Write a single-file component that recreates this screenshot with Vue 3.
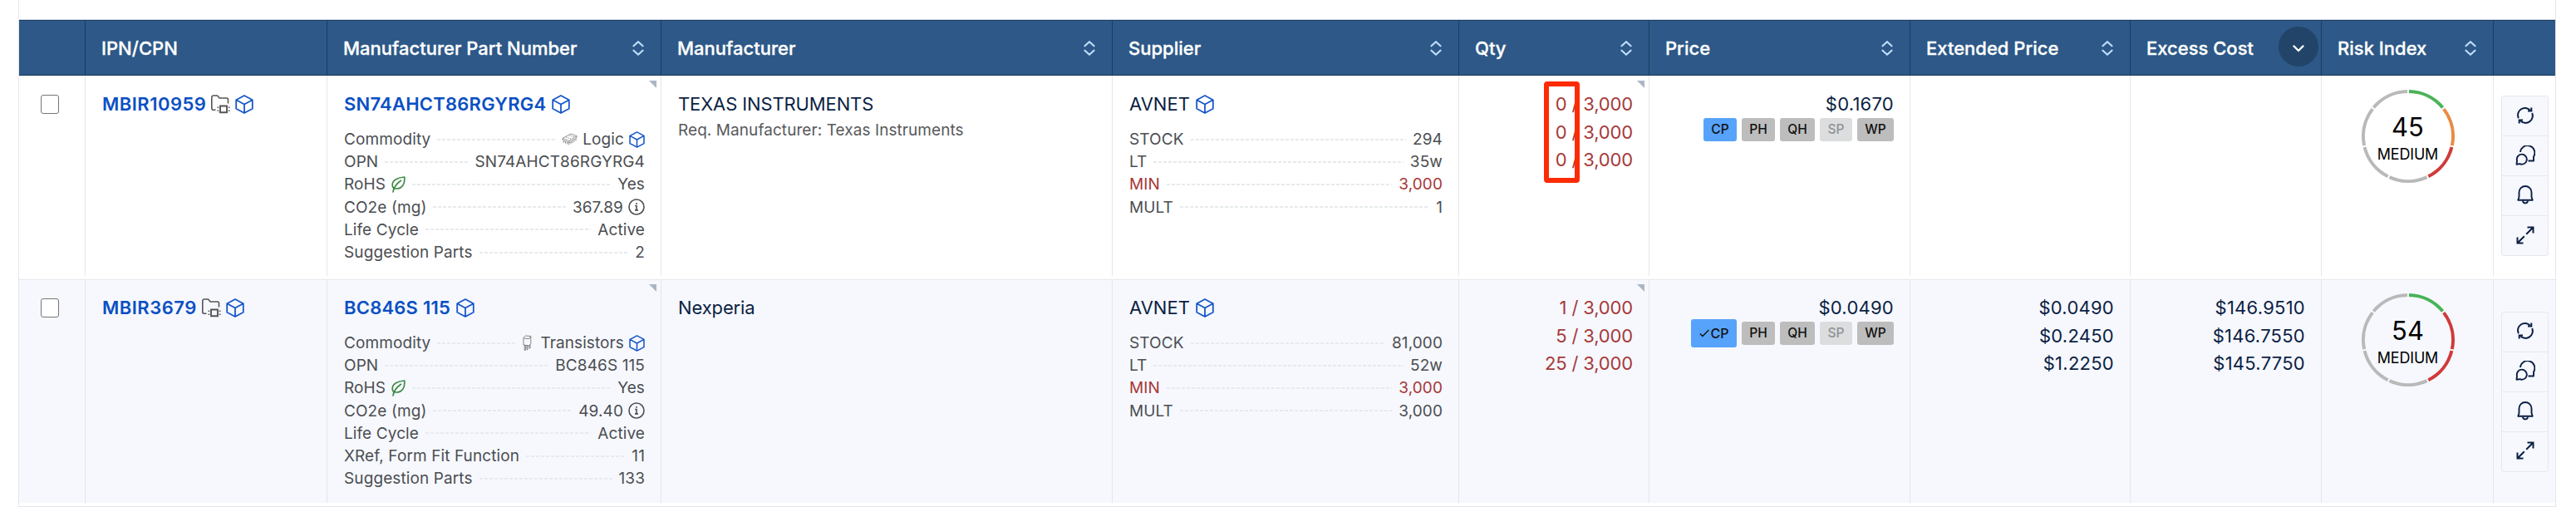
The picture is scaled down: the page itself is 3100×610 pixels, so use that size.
<template>
  <div class="page">
    <div class="grid-wrap">
      <!-- header -->
      <div class="row head">
        <div v-for="col in columns" :key="col.key" class="th">
          <span>{{ col.label }}</span>
          <span v-if="col.sort === 'active'" class="sort-active">
            <svg width="14" height="9" viewBox="0 0 14 9" fill="none" stroke="currentColor" stroke-width="2.4" stroke-linecap="round" stroke-linejoin="round">
              <path d="M1.5 1.5l5.5 5.5 5.5-5.5"/>
            </svg>
          </span>
          <svg v-else-if="col.sort" class="sort" width="14" height="18" viewBox="0 0 14 18" fill="none" stroke="currentColor" stroke-width="2.2" stroke-linecap="round" stroke-linejoin="round">
            <path d="M1.5 6.3L7 1.2l5.5 5.1"/>
            <path d="M1.5 11.7L7 16.800l5.5-5.1"/>
          </svg>
        </div>
      </div>

      <!-- parts -->
      <div v-for="part in parts" :key="part.ipn" class="row body" :class="{ odd: part.odd }">
        <div class="td check-cell"><span class="checkbox"></span></div>

        <div class="td">
          <div class="title link ipn">
            <span>{{ part.ipn }}</span>
            <svg class="folder" width="23" height="23" viewBox="0 0 23 23" fill="none" stroke="currentColor" stroke-width="1.6">
              <path d="M5.5 18.3H2.8a2 2 0 0 1-2-2V3a2 2 0 0 1 2-2h4.700l2.600 3h8.600a1.800 1.800 0 0 1 1.800 1.800V10.500"/>
              <path d="M11 13.500h8v7.700h-8z" stroke-width="1.900"/>
              <path d="M7.500 15.200h1.700M7.500 19.300h1.700M20.800 15.200h1.700M20.800 19.300h1.700"/>
            </svg>
            <svg class="cube" width="22" height="23" viewBox="0 0 22 23"><use href="#cube"/></svg>
          </div>
        </div>

        <div class="td">
          <i class="corner"></i>
          <div class="title link mpn">
            <span>{{ part.mpn }}</span>
            <svg class="cube" width="22" height="23" viewBox="0 0 22 23"><use href="#cube"/></svg>
          </div>
          <div class="details">
            <div v-for="d in part.details" :key="d.label" class="detail">
              <span>{{ d.label }}</span>
              <svg v-if="d.leaf" class="leaf" width="17" height="20" viewBox="0 0 17 20" fill="none" stroke="currentColor" stroke-width="1.7" stroke-linecap="round" stroke-linejoin="round">
                <path d="M15.8 1C8 1.5 1.200 4.500 1.200 10.300c0 2.400 1.300 4.700 4.300 4.700 7.500 0 11-5.500 10.300-14z"/>
                <path d="M11.500 5.300C7 8.500 3 12 2 18.800"/>
              </svg>
              <i class="dots"></i>
              <svg v-if="d.icon === 'chip'" class="chip" width="19" height="15" viewBox="0 0 19 15" fill="none" stroke="currentColor" stroke-width="0.8">
                <path d="M1 6.500L11 1l7 2.600-9 5.900z"/>
                <path d="M1 6.500v2l8 3.200V9.500M9 11.700l9-5.900V3.600"/>
                <path d="M2.500 9.500v2.300M4.500 10.400v2.300M6.500 11.200v2.300M8.500 12v2.300M11 11v2.300M13 9.700V12M15 8.400v2.300M17 7v2.300"/>
                <path d="M5 5l7.500 2.400M9 2.800l7 2.200" stroke-dasharray="1.500 1"/>
              </svg>
              <svg v-if="d.icon === 'transistor'" class="transistor" width="11" height="19" viewBox="0 0 11 19" fill="none" stroke="currentColor" stroke-width="0.9">
                <path d="M1 3.500L3.300 1l6.500.500v9L7.800 13 1 12z"/>
                <path d="M1 3.500l1.500.800 5.300.300 2-3M2.300 12.200v6.300h1v-6M5 12.600v5.200h1v-5M8 12.800v3.200h1v-4.500"/>
              </svg>
              <span>{{ d.value }}</span>
              <svg v-if="d.icon" class="cube small" width="19" height="20" viewBox="0 0 22 23"><use href="#cube"/></svg>
              <svg v-if="d.info" class="info" width="20" height="20" viewBox="0 0 20 20" fill="none" stroke="currentColor" stroke-width="1.6">
                <circle cx="10" cy="10" r="9"/>
                <path d="M8.200 8.500H10v5.200M8 13.900h4"/>
                <path d="M10 5v1.700"/>
              </svg>
            </div>
          </div>
        </div>

        <div class="td">
          <div class="title name">{{ part.manufacturer }}</div>
          <div v-if="part.requested" class="requested">Req. Manufacturer: {{ part.requested }}</div>
        </div>

        <div class="td">
          <div class="title supplier">
            <span>{{ part.supplier }}</span>
            <svg class="cube" width="22" height="23" viewBox="0 0 22 23"><use href="#cube"/></svg>
          </div>
          <div class="details">
            <div v-for="s in part.stock" :key="s.label" class="detail" :class="{ warn: s.warn }">
              <span>{{ s.label }}</span>
              <i class="dots"></i>
              <span>{{ s.value }}</span>
            </div>
          </div>
        </div>

        <div class="td">
          <i class="corner"></i>
          <div v-for="(q, i) in part.qty" :key="i" class="line qty">{{ q }} / 3,000</div>
          <div v-if="part.marked" class="mark"></div>
        </div>

        <div class="td">
          <div class="line money">{{ part.price }}</div>
          <div class="tags">
            <span class="tag selected" :class="{ checked: part.checked }">
              <svg v-if="part.checked" width="12" height="10" viewBox="0 0 12 10" fill="none" stroke="currentColor" stroke-width="1.4">
                <path d="M.8 5.500l3.200 3L11.300 1"/>
              </svg>CP
            </span>
            <span class="tag">PH</span>
            <span class="tag w42">QH</span>
            <span class="tag muted">SP</span>
            <span class="tag w44">WP</span>
          </div>
        </div>

        <div class="td">
          <div v-for="p in part.extended" :key="p" class="line money">{{ p }}</div>
        </div>

        <div class="td">
          <div v-for="p in part.excess" :key="p" class="line money">{{ p }}</div>
        </div>

        <div class="td risk-cell">
          <div class="gauge">
            <svg width="112" height="112" viewBox="0 0 112 112" fill="none" stroke-width="4">
              <path v-for="(color, i) in part.risk" :key="i" :d="arc(i)" :stroke="color"/>
            </svg>
            <div class="gauge-text">
              <span class="score">{{ part.score }}</span>
              <span class="level">MEDIUM</span>
            </div>
          </div>
        </div>

        <div class="td action-cell">
          <div class="actions">
            <div class="action">
              <svg width="22" height="22" viewBox="0 0 22 22" fill="none" stroke="currentColor" stroke-width="2">
                <path d="M2.800 14.200A8.600 8.600 0 0 1 16.800 4.600M19.200 8a8.600 8.600 0 0 1-14 9.400"/>
                <path d="M18.300 1.600v4h-4.300M3.700 20.400v-4h4.300"/>
              </svg>
            </div>
            <div class="action">
              <svg width="24" height="24" viewBox="0 0 24 24" fill="none" stroke="currentColor" stroke-width="1.9" stroke-linejoin="round">
                <path d="M6 8a8.700 8.700 0 1 1 16 5.500v5h-6.500"/>
                <path d="M1.500 22.700l.500-4.500a6 6 0 1 1 3.300 3.900z"/>
              </svg>
            </div>
            <div class="action">
              <svg width="20" height="23" viewBox="0 0 20 23" fill="none" stroke="currentColor" stroke-width="1.9" stroke-linejoin="round">
                <path d="M1.300 17.800l1.200-3.800V8.500a7.500 7.500 0 0 1 15 0V14l1.200 3.800z"/>
                <path d="M7 18.500c.200 2 1.300 3 3 3s2.800-1 3-3"/>
              </svg>
            </div>
            <div class="action">
              <svg width="22" height="22" viewBox="0 0 22 22" fill="none" stroke="currentColor" stroke-width="2">
                <path d="M13.500 1.500h7v7M20 2l-7.800 7.800M8.500 20.500h-7v-7M2 20l7.800-7.800"/>
              </svg>
            </div>
          </div>
        </div>
      </div>
    </div>

    <svg class="defs" width="0" height="0">
      <symbol id="cube" viewBox="0 0 22 23">
        <path d="M11 1l9.800 5.200v10.600L11 22 1.200 16.800V6.200zM1.200 6.200L11 11.500l9.800-5.300M11 11.500V22" fill="none" stroke="currentColor" stroke-width="1.8" stroke-linejoin="round"/>
      </symbol>
    </svg>
  </div>
</template>

<script setup>
const columns = [
  { key: 'check', label: '' },
  { key: 'ipn', label: 'IPN/CPN' },
  { key: 'mpn', label: 'Manufacturer Part Number', sort: 'both' },
  { key: 'manufacturer', label: 'Manufacturer', sort: 'both' },
  { key: 'supplier', label: 'Supplier', sort: 'both' },
  { key: 'qty', label: 'Qty', sort: 'both' },
  { key: 'price', label: 'Price', sort: 'both' },
  { key: 'extended', label: 'Extended Price', sort: 'both' },
  { key: 'excess', label: 'Excess Cost', sort: 'active' },
  { key: 'risk', label: 'Risk Index', sort: 'both' },
  { key: 'actions', label: '' }
]

const GREEN = '#49b358'
const ORANGE = '#e98b45'
const RED = '#d13a3a'
const GREY = '#b9b9b9'

const parts = [
  {
    ipn: 'MBIR10959',
    mpn: 'SN74AHCT86RGYRG4',
    details: [
      { label: 'Commodity', value: 'Logic', icon: 'chip' },
      { label: 'OPN', value: 'SN74AHCT86RGYRG4' },
      { label: 'RoHS', value: 'Yes', leaf: true },
      { label: 'CO2e (mg)', value: '367.89', info: true },
      { label: 'Life Cycle', value: 'Active' },
      { label: 'Suggestion Parts', value: '2' }
    ],
    manufacturer: 'TEXAS INSTRUMENTS',
    requested: 'Texas Instruments',
    supplier: 'AVNET',
    stock: [
      { label: 'STOCK', value: '294' },
      { label: 'LT', value: '35w' },
      { label: 'MIN', value: '3,000', warn: true },
      { label: 'MULT', value: '1' }
    ],
    qty: [0, 0, 0],
    marked: true,
    price: '$0.1670',
    extended: [],
    excess: [],
    score: 45,
    risk: [GREEN, ORANGE, RED, GREY, GREY, GREY, GREY]
  },
  {
    odd: true,
    ipn: 'MBIR3679',
    mpn: 'BC846S 115',
    details: [
      { label: 'Commodity', value: 'Transistors', icon: 'transistor' },
      { label: 'OPN', value: 'BC846S 115' },
      { label: 'RoHS', value: 'Yes', leaf: true },
      { label: 'CO2e (mg)', value: '49.40', info: true },
      { label: 'Life Cycle', value: 'Active' },
      { label: 'XRef, Form Fit Function', value: '11' },
      { label: 'Suggestion Parts', value: '133' }
    ],
    manufacturer: 'Nexperia',
    supplier: 'AVNET',
    stock: [
      { label: 'STOCK', value: '81,000' },
      { label: 'LT', value: '52w' },
      { label: 'MIN', value: '3,000', warn: true },
      { label: 'MULT', value: '3,000' }
    ],
    qty: [1, 5, 25],
    price: '$0.0490',
    checked: true,
    extended: ['$0.0490', '$0.2450', '$1.2250'],
    excess: ['$146.9510', '$146.7550', '$145.7750'],
    score: 54,
    risk: [GREEN, RED, RED, GREY, GREY, GREY, GREY]
  }
]

// one of seven ring segments, clockwise from the top
function arc(i) {
  const step = (Math.PI * 2) / 7
  const gap = 0.018
  const a = i * step - Math.PI / 2 + gap
  const b = (i + 1) * step - Math.PI / 2 - gap
  const pt = (t) => (56 + 54 * Math.cos(t)).toFixed(2) + ' ' + (56 + 54 * Math.sin(t)).toFixed(2)
  return `M${pt(a)}A54 54 0 0 1 ${pt(b)}`
}
</script>

<style>
body {
  background: #fff;
}
</style>

<style scoped>
.page {
  height: 610px;
  padding: 0 24px 0 22px;
  box-sizing: border-box;
  overflow: hidden;
  font-family: Inter, "Liberation Sans", sans-serif;
  font-size: 22px;
  color: #0c1f44;
}

.grid-wrap {
  height: 610px;
  box-sizing: border-box;
  border-left: 1px solid #e3e6ed;
  border-right: 1px solid #e3e6ed;
  padding-top: 23px;
}

.row {
  display: grid;
  grid-template-columns: 80px 291px 402px 543px 417px 229px 314px 265px 230px 207px 74px;
}

.head {
  height: 68px;
  box-sizing: border-box;
  background: #2d5887;
  border-top: 1px solid #d5dfeb;
  border-bottom: 1px solid #193556;
  box-shadow: inset 0 1px 0 #1d3c62;
}

.th {
  display: flex;
  align-items: center;
  justify-content: space-between;
  padding: 2px 20px 0 19px;
  border-right: 1px solid #1c3b61;
  color: #fff;
  font-weight: 500;
  -webkit-text-stroke: 0.3px #fff;
  white-space: nowrap;
}

.th:last-child {
  border-right: 0;
}

.sort {
  color: #bfdcfb;
}

.sort-active {
  display: flex;
  align-items: center;
  justify-content: center;
  width: 48px;
  height: 48px;
  margin: -4px -17px 0 0;
  border-radius: 50%;
  background: #224468;
}

.sort-active svg {
  margin-top: 4px;
}

.body {
  height: 245px;
  box-sizing: border-box;
  padding-bottom: 4px;
}

.body.odd {
  height: 274px;
  border-top: 1px solid #e3e6ee;
  border-bottom: 1px solid #e3e6ed;
}

.body.odd .td {
  background: #f6f8fd;
  padding-top: 16px;
}

.td {
  position: relative;
  padding: 17px 19px 0 20px;
  border-right: 1px solid #e3e6ec;
}

.td:last-child {
  border-right: 0;
}

.title,
.line {
  height: 34px;
  line-height: 35px;
  white-space: nowrap;
}

.title {
  display: flex;
  align-items: center;
}

.link {
  color: #0b50c3;
  font-weight: 600;
  letter-spacing: 0.22px;
}

.ipn {
  letter-spacing: 0.48px;
}

.name {
  letter-spacing: -0.12px;
}

.cube {
  color: #1757c8;
  margin-left: 7px;
}

.folder {
  color: #555;
  margin-left: 6px;
}

.folder + .cube {
  margin-left: 6px;
}

.check-cell {
  padding: 23px 0 0 26px;
}

.body.odd .check-cell {
  padding-top: 22px;
}

.checkbox {
  display: block;
  width: 22px;
  height: 23px;
  box-sizing: border-box;
  border: 1px solid #767676;
  border-radius: 3px;
  background: #fff;
}

.corner {
  position: absolute;
  top: 6px;
  right: 5px;
  width: 9px;
  height: 9px;
  background: #abb6c3;
  clip-path: polygon(0 0, 100% 0, 100% 100%);
}

.body.odd .corner {
  top: 5px;
}

.details {
  margin-top: 12px;
}

.detail {
  display: flex;
  align-items: center;
  height: 27.2px;
  font-size: 19px;
  line-height: 27.2px;
  letter-spacing: 0.1px;
  color: #4c4e52;
  white-space: nowrap;
}

.detail.warn {
  color: #a83636;
}

.dots {
  flex: 1;
  height: 2px;
  margin: 0 8px;
  background: repeating-linear-gradient(90deg, #e6eaed 0 4px, transparent 4px 6px);
}

.leaf {
  color: #3f8a45;
  margin-left: 7px;
}

.chip {
  color: #777;
  margin-right: 6px;
}

.transistor {
  color: #777;
  margin-right: 10px;
}

.small,
.info {
  margin-left: 6px;
}

.requested {
  font-size: 19px;
  line-height: 30px;
  letter-spacing: 0.07px;
  color: #58595c;
}

.line {
  height: 33.5px;
  line-height: 34px;
  text-align: right;
}

.qty {
  color: #a63a3a;
  letter-spacing: -0.15px;
}

.mark {
  position: absolute;
  left: 102px;
  top: 7px;
  width: 43px;
  height: 122px;
  box-sizing: border-box;
  border: 6px solid #fd2b04;
  border-radius: 4px;
}

.money {
  letter-spacing: 0.25px;
}

.tags {
  display: flex;
  justify-content: flex-end;
  align-items: center;
  gap: 6px;
  height: 34px;
  margin-top: -3px;
}

.tag {
  display: flex;
  align-items: center;
  justify-content: center;
  width: 40px;
  height: 28px;
  border-radius: 3px;
  background: #bdbdbd;
  color: #111;
  font-size: 15.5px;
  font-weight: 500;
}

.tag.selected {
  background: #57a3fc;
}

.tag.checked {
  width: 55px;
  height: 34px;
  font-size: 16px;
}

.tag.checked svg {
  margin-right: 2px;
}

.tag.muted {
  width: 39px;
  background: #dcdddf;
  color: #919294;
}

.tag.w42 {
  width: 42px;
}

.tag.w44 {
  width: 44px;
}

.risk-cell {
  display: flex;
  justify-content: center;
  align-items: flex-start;
}

.gauge {
  position: relative;
  width: 112px;
  height: 112px;
}

.gauge svg {
  display: block;
}

.gauge-text {
  position: absolute;
  inset: 0;
  display: flex;
  flex-direction: column;
  align-items: center;
  padding-top: 28px;
  color: #000;
}

.score {
  font-size: 31px;
  line-height: 34px;
}

.level {
  margin-top: 5px;
  font-size: 18px;
  line-height: 21px;
  letter-spacing: -0.2px;
}

.action-cell,
.body.odd .action-cell {
  display: flex;
  align-items: center;
  padding: 0 0 0 9px;
}

.actions {
  width: 57px;
  box-sizing: border-box;
  border: 1px solid #e5e8ef;
  border-radius: 3px;
  background: #f6f8fd;
}

.action {
  display: flex;
  align-items: center;
  justify-content: center;
  height: 47px;
  padding-bottom: 2px;
  box-sizing: border-box;
}

.action + .action {
  height: 48px;
  border-top: 1px solid #e5e8ef;
}

.defs {
  position: absolute;
}
</style>
